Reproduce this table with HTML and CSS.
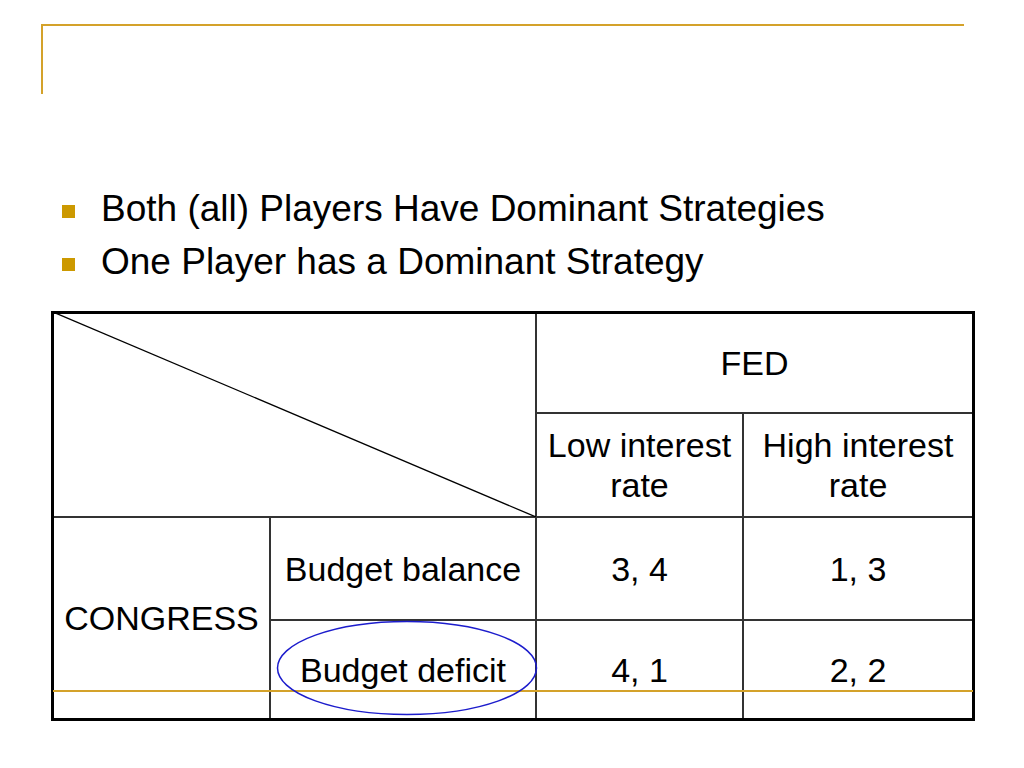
FILE: index.html
```html
<!DOCTYPE html>
<html>
<head>
<meta charset="utf-8">
<link rel="stylesheet" href="styles.css">
</head>
<body>
<div class="slide">
  <div class="deco-top"></div>
  <div class="deco-left"></div>

  <ul class="bullets">
    <li><span class="sq"></span>Both (all) Players Have Dominant Strategies</li>
    <li><span class="sq"></span>One Player has a Dominant Strategy</li>
  </ul>

  <div class="matrix">
    <div class="cell corner">
      <svg class="diag" viewBox="0 0 100 100" preserveAspectRatio="none"><line x1="0" y1="0" x2="100" y2="100" vector-effect="non-scaling-stroke"/></svg>
    </div>
    <div class="cell fed">FED</div>
    <div class="cell h3">Low interest<br>rate</div>
    <div class="cell h4">High interest<br>rate</div>
    <div class="cell congress">CONGRESS</div>
    <div class="cell">Budget balance</div>
    <div class="cell">3, 4</div>
    <div class="cell">1, 3</div>
    <div class="cell">Budget deficit</div>
    <div class="cell">4, 1</div>
    <div class="cell">2, 2</div>
  </div>

  <div class="deco-bottom"></div>
  <svg class="ring" viewBox="0 0 262 96"><ellipse cx="131" cy="48" rx="129.5" ry="46.5"/></svg>
</div>
</body>
</html>
```

FILE: styles.css
```css
html, body {
  margin: 0;
  padding: 0;
  background: #fff;
}

.slide {
  position: relative;
  width: 1024px;
  height: 768px;
  overflow: hidden;
  font-family: "Liberation Sans", Arial, sans-serif;
  color: #000;
}

.deco-top {
  position: absolute;
  left: 41px;
  top: 24px;
  width: 923px;
  height: 2px;
  background: #d4a22a;
}

.deco-left {
  position: absolute;
  left: 41px;
  top: 24px;
  width: 2px;
  height: 70px;
  background: #d4a22a;
}

.deco-bottom {
  position: absolute;
  left: 53px;
  top: 690px;
  width: 920px;
  height: 2px;
  background: #d4a22a;
}

.bullets {
  list-style: none;
  margin: 0;
  padding: 182px 0 0 62px;
}

.bullets li {
  display: flex;
  align-items: center;
  height: 53px;
  font-size: 37px;
  line-height: 53px;
  white-space: nowrap;
}

.sq {
  display: inline-block;
  width: 13px;
  height: 13px;
  background: #cc9900;
  margin: 6px 26px 0 0;
  flex: none;
}

.matrix {
  display: grid;
  grid-template-columns: 215px 264px 205px 228px;
  grid-template-rows: 98px 102px 101px 97px;
  gap: 2px;
  background: #333;
  border: 3px solid #000;
  width: 918px;
  margin: 23px 0 0 51px;
}

.cell {
  background: #fff;
  display: flex;
  align-items: center;
  justify-content: center;
  text-align: center;
  font-size: 34px;
  line-height: 40px;
}

.corner {
  grid-column: 1 / 3;
  grid-row: 1 / 3;
  position: relative;
}

.diag {
  position: absolute;
  left: -1px;
  top: -2px;
  width: calc(100% + 2px);
  height: calc(100% + 3px);
}

.diag line {
  stroke: #000;
  stroke-width: 1.3;
}

.fed {
  grid-column: 3 / 5;
}

.congress {
  grid-row: 3 / 5;
}

.ring {
  position: absolute;
  left: 276px;
  top: 620px;
  width: 262px;
  height: 96px;
}

.ring ellipse {
  fill: none;
  stroke: #1c1ccc;
  stroke-width: 1.5;
}
```
